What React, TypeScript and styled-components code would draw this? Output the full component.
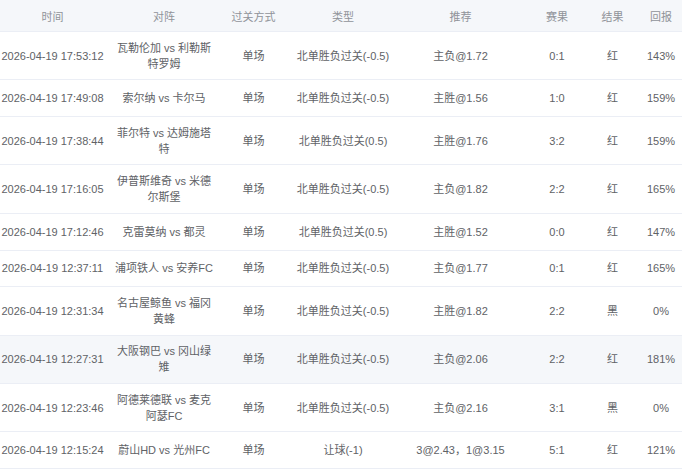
import React from "react";
import styled, { createGlobalStyle } from "styled-components";

const Global = createGlobalStyle`
  html, body { margin: 0; padding: 0; background: #ffffff; }
  body {
    font-family: "Liberation Sans", Arial, "Noto Sans CJK SC", sans-serif;
  }
`;

const Table = styled.table`
  width: 682px;
  table-layout: fixed;
  border-collapse: collapse;
  border-spacing: 0;
  font-size: 11px;
  color: #606266;
`;

const Th = styled.th<{ $padR?: number }>`
  height: 31px;
  padding: 0 ${(p) => p.$padR ?? 0}px 0 0;
  background: #f5f7fa;
  color: #909399;
  font-weight: 400;
  text-align: center;
  border-bottom: 1px solid #ebeef5;
  white-space: nowrap;
`;

const Row = styled.tr<{ $hover?: boolean }>`
  background: ${(p) => (p.$hover ? "#f5f7fa" : "#ffffff")};
`;

const Td = styled.td<{ $padL?: number; $padR?: number }>`
  padding: 7.7px ${(p) => p.$padR ?? 4}px 7.7px ${(p) => p.$padL ?? 4}px;
  border-bottom: 1px solid #ebeef5;
  text-align: center;
  vertical-align: middle;
`;

const Cell = styled.div`
  line-height: 20.35px;
  text-align: center;
  white-space: nowrap;
`;

const MatchCell = styled.div`
  line-height: 16px;
  text-align: center;
  white-space: normal;
`;

type Bet = {
  time: string;
  match: string;
  mode: string;
  type: string;
  rec: string;
  score: string;
  result: string;
  ret: string;
  hover?: boolean;
};

const rows: Bet[] = [
  { time: "2026-04-19 17:53:12", match: "瓦勒伦加 vs 利勒斯特罗姆", mode: "单场", type: "北单胜负过关(-0.5)", rec: "主负@1.72", score: "0:1", result: "红", ret: "143%" },
  { time: "2026-04-19 17:49:08", match: "索尔纳 vs 卡尔马", mode: "单场", type: "北单胜负过关(-0.5)", rec: "主胜@1.56", score: "1:0", result: "红", ret: "159%" },
  { time: "2026-04-19 17:38:44", match: "菲尔特 vs 达姆施塔特", mode: "单场", type: "北单胜负过关(0.5)", rec: "主胜@1.76", score: "3:2", result: "红", ret: "159%" },
  { time: "2026-04-19 17:16:05", match: "伊普斯维奇 vs 米德尔斯堡", mode: "单场", type: "北单胜负过关(-0.5)", rec: "主负@1.82", score: "2:2", result: "红", ret: "165%" },
  { time: "2026-04-19 17:12:46", match: "克雷莫纳 vs 都灵", mode: "单场", type: "北单胜负过关(0.5)", rec: "主胜@1.52", score: "0:0", result: "红", ret: "147%" },
  { time: "2026-04-19 12:37:11", match: "浦项铁人 vs 安养FC", mode: "单场", type: "北单胜负过关(-0.5)", rec: "主负@1.77", score: "0:1", result: "红", ret: "165%" },
  { time: "2026-04-19 12:31:34", match: "名古屋鲸鱼 vs 福冈黄蜂", mode: "单场", type: "北单胜负过关(-0.5)", rec: "主胜@1.82", score: "2:2", result: "黑", ret: "0%" },
  { time: "2026-04-19 12:27:31", match: "大阪钢巴 vs 冈山绿雉", mode: "单场", type: "北单胜负过关(-0.5)", rec: "主负@2.06", score: "2:2", result: "红", ret: "181%", hover: true },
  { time: "2026-04-19 12:23:46", match: "阿德莱德联 vs 麦克阿瑟FC", mode: "单场", type: "北单胜负过关(-0.5)", rec: "主负@2.16", score: "3:1", result: "黑", ret: "0%" },
  { time: "2026-04-19 12:15:24", match: "蔚山HD vs 光州FC", mode: "单场", type: "让球(-1)", rec: "3@2.43，1@3.15", score: "5:1", result: "红", ret: "121%" },
];

const widths = [105, 118, 61, 118, 127, 56, 55, 42];
const headers = ["时间", "对阵", "过关方式", "类型", "推荐", "赛果", "结果", "回报"];

export default function App() {
  return (
    <>
      <Global />
      <Table>
        <colgroup>
          {widths.map((w, i) => (
            <col key={i} style={{ width: w }} />
          ))}
        </colgroup>
        <thead>
          <tr>
            {headers.map((h, i) => (
              <Th key={h} $padR={i === 4 ? 10 : 0}>
                {h}
              </Th>
            ))}
          </tr>
        </thead>
        <tbody>
          {rows.map((r) => (
            <Row key={r.time} $hover={r.hover}>
              <Td $padL={0} $padR={0}>
                <Cell>{r.time}</Cell>
              </Td>
              <Td $padL={9} $padR={9}>
                <MatchCell>{r.match}</MatchCell>
              </Td>
              <Td>
                <Cell>{r.mode}</Cell>
              </Td>
              <Td>
                <Cell>{r.type}</Cell>
              </Td>
              <Td $padL={0} $padR={10}>
                <Cell>{r.rec}</Cell>
              </Td>
              <Td>
                <Cell>{r.score}</Cell>
              </Td>
              <Td>
                <Cell>{r.result}</Cell>
              </Td>
              <Td $padL={0} $padR={0}>
                <Cell>{r.ret}</Cell>
              </Td>
            </Row>
          ))}
        </tbody>
      </Table>
    </>
  );
}
